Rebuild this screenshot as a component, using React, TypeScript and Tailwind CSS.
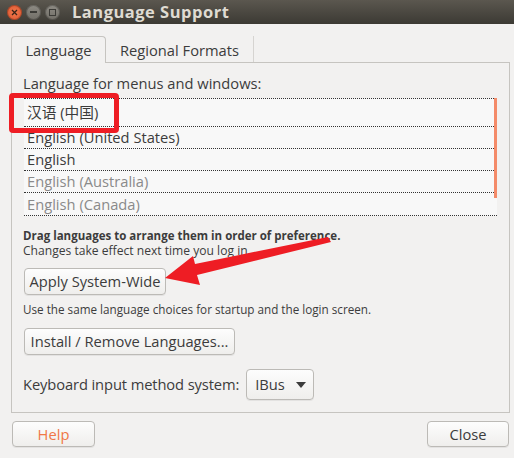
import React from "react";

function Btn({ children, className = "" }: { children: React.ReactNode; className?: string }) {
  return (
    <div
      className={
        "flex items-center justify-center rounded-[4px] border border-[#bcbab6] bg-linear-to-b from-[#fdfdfd] to-[#efeeec] shadow-[0_1px_0_rgba(0,0,0,0.06)] " +
        className
      }
    >
      {children}
    </div>
  );
}

export default function App() {
  const rows: { t: string; c: string; h: string }[] = [
    { t: "汉语 (中国)", c: "text-[#3c3c3c]", h: "h-[28px]" },
    { t: "English (United States)", c: "text-[#3c3c3c]", h: "h-[22px]" },
    { t: "English", c: "text-[#3c3c3c]", h: "h-[22px]" },
    { t: "English (Australia)", c: "text-[#8a8a8a]", h: "h-[22px]" },
    { t: "English (Canada)", c: "text-[#8a8a8a]", h: "h-[22px]" },
  ];
  return (
    <div className="relative w-[514px] h-[458px] overflow-hidden bg-[#f2f1f0] font-['Open_Sans','Noto_Sans_CJK_SC',sans-serif] text-[#3c3c3c] text-[14.7px]">
      {/* title bar */}
      <div className="flex h-[24px] items-center bg-linear-to-b from-[#5b574f] to-[#3c3a34]">
        <div className="ml-[7px] flex items-center gap-[4px]">
          <div className="flex h-[15px] w-[15px] items-center justify-center rounded-full bg-radial from-[#f27a4e] to-[#d9502a] shadow-[inset_0_0_0_1px_rgba(0,0,0,0.25)]">
            <svg width="7" height="7" viewBox="0 0 7 7">
              <path d="M1 1L6 6M6 1L1 6" stroke="#3b2418" strokeWidth="1.3" />
            </svg>
          </div>
          <div className="flex h-[15px] w-[15px] items-center justify-center rounded-full bg-linear-to-b from-[#8e8b84] to-[#716e67] shadow-[inset_0_0_0_1px_rgba(0,0,0,0.25)]">
            <div className="h-[1.5px] w-[7px] bg-[#3c3b37]" />
          </div>
          <div className="flex h-[15px] w-[15px] items-center justify-center rounded-full bg-linear-to-b from-[#8e8b84] to-[#716e67] shadow-[inset_0_0_0_1px_rgba(0,0,0,0.25)]">
            <div className="h-[7px] w-[7px] border-[1.3px] border-[#3c3b37]" />
          </div>
        </div>
        <div className="ml-[12px] text-[16.5px] font-bold tracking-[0.5px] text-[#dfdbd2]">Language Support</div>
      </div>

      {/* tabs */}
      <div className="ml-[11px] mt-[12px] flex h-[26px] w-[499px] items-stretch">
        <div className="relative z-10 -mb-[1px] flex w-[95px] items-center justify-center rounded-t-[4px] border border-b-0 border-[#c6c4c0] bg-[#f2f1f0]">
          Language
        </div>
        <div className="flex w-[148px] items-center justify-center border-r border-[#d6d4d1] pt-[2px]">
          Regional Formats
        </div>
      </div>

      {/* frame */}
      <div className="ml-[11px] flex h-[351px] w-[499px] flex-col border border-[#c6c4c0] pl-[11px] pt-[10px]">
        <div className="leading-[20px]">Language for menus and windows:</div>
        <div className="ml-[1px] mt-[5px] w-[473px] border-b border-dotted border-[#333] bg-[#f8f8f8]">
          <div className="flex">
            <div className="flex-1 border-t border-dotted border-[#333]">
              {rows.map((r, i) => (
                <div
                  key={i}
                  className={
                    "flex items-center pl-[3px] " +
                    r.h +
                    " " +
                    r.c +
                    (i < rows.length - 1 ? " border-b border-dotted border-[#333]" : "")
                  }
                >
                  {r.t}
                </div>
              ))}
            </div>
            <div className="w-[3px]">
              <div className="h-[100px] bg-[#f48b69]" />
            </div>
          </div>
        </div>
        <div className="mt-[12px] leading-[15px]">
          <div className="text-[11.5px] font-bold">Drag languages to arrange them in order of preference.</div>
          <div className="text-[12.1px]">Changes take effect next time you log in.</div>
        </div>
        <Btn className="ml-[1px] mt-[10px] h-[27px] w-[142px]">Apply System-Wide</Btn>
        <div className="mt-[7px] text-[11.7px] leading-[15px]">
          Use the same language choices for startup and the login screen.
        </div>
        <Btn className="ml-[1px] mt-[11px] h-[27px] w-[211px]">Install / Remove Languages...</Btn>
        <div className="mt-[14px] flex items-center">
          <div className="tracking-[-0.1px]">Keyboard input method system:</div>
          <Btn className="ml-[7px] h-[31px] w-[68px] justify-start pl-[8px]">
            <span>IBus</span>
            <svg className="ml-[11px]" width="10" height="6" viewBox="0 0 10 6">
              <path d="M0 0H10L5 6Z" fill="#3c3c3c" />
            </svg>
          </Btn>
        </div>
      </div>

      {/* footer */}
      <div className="mt-[8px] flex w-[509px] justify-between pl-[12px]">
        <Btn className="h-[26px] w-[83px] text-[#f07746]">Help</Btn>
        <Btn className="h-[26px] w-[82px]">Close</Btn>
      </div>

      {/* annotations */}
      <div className="pointer-events-none absolute left-[9px] top-[93px] h-[40px] w-[110px] rounded-[4px] border-[5px] border-[#ee1d24]" />
      <svg className="pointer-events-none absolute left-0 top-0" width="514" height="458" viewBox="0 0 514 458">
        <polygon
          points="165,278 193,256 195,264 328,237 331,242 197,275 200,285"
          fill="#ee1d24"
        />
      </svg>
    </div>
  );
}
